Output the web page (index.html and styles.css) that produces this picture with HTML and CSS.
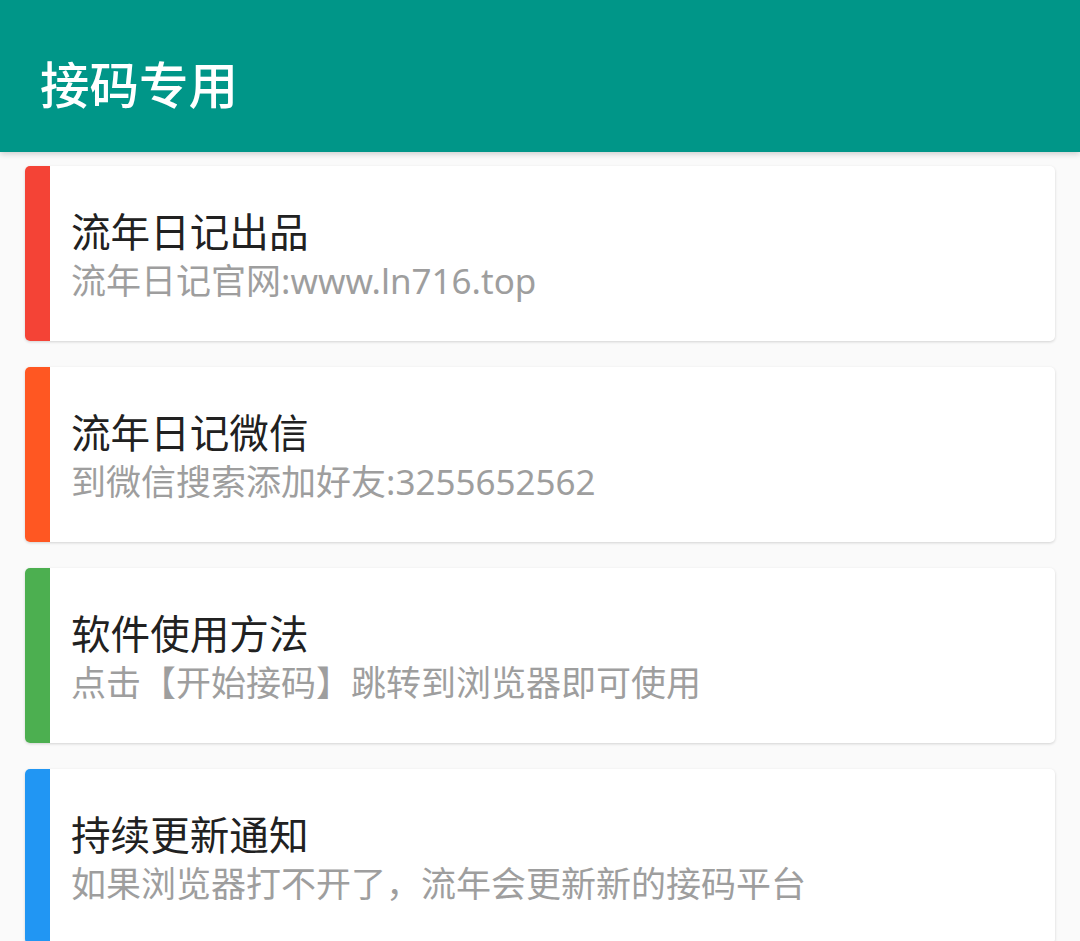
FILE: index.html
```html
<!DOCTYPE html>
<html lang="zh">
<head>
<meta charset="utf-8">
<title>接码专用</title>
<link rel="stylesheet" href="styles.css">
</head>
<body>
<header class="appbar">
  <h1 class="appbar-title">接码专用</h1>
</header>
<main class="list">
  <div class="card">
    <div class="bar bar-red"></div>
    <div class="card-body">
      <div class="card-title">流年日记出品</div>
      <div class="card-sub">流年日记官网:www.ln716.top</div>
    </div>
  </div>
  <div class="card">
    <div class="bar bar-orange"></div>
    <div class="card-body">
      <div class="card-title">流年日记微信</div>
      <div class="card-sub">到微信搜索添加好友:3255652562</div>
    </div>
  </div>
  <div class="card">
    <div class="bar bar-green"></div>
    <div class="card-body">
      <div class="card-title">软件使用方法</div>
      <div class="card-sub">点击【开始接码】跳转到浏览器即可使用</div>
    </div>
  </div>
  <div class="card">
    <div class="bar bar-blue"></div>
    <div class="card-body">
      <div class="card-title">持续更新通知</div>
      <div class="card-sub">如果浏览器打不开了，流年会更新新的接码平台</div>
    </div>
  </div>
</main>
</body>
</html>
```
FILE: styles.css
```css
html, body {
  margin: 0;
  padding: 0;
}
body {
  background: #fafafa;
  font-family: "Noto Sans CJK SC", sans-serif;
  width: 1080px;
  height: 941px;
  overflow: hidden;
}
.appbar {
  height: 152px;
  background: #009688;
  display: flex;
  align-items: center;
  padding-left: 40px;
  box-shadow: 0 2px 6px rgba(0,0,0,0.18);
  position: relative;
  z-index: 1;
}
.appbar-title {
  margin: 0;
  color: #ffffff;
  font-size: 49.5px;
  font-weight: 500;
  line-height: 1;
  margin-top: 14px;
}
.list {
  display: flex;
  flex-direction: column;
  gap: 26px;
  padding: 14px 25px 0 25px;
}
.card {
  height: 175px;
  background: #ffffff;
  border-radius: 5px;
  display: flex;
  overflow: hidden;
  box-shadow: 0 1px 3px rgba(0,0,0,0.16);
  flex-shrink: 0;
}
.bar {
  width: 25px;
  flex-shrink: 0;
}
.bar-red { background: #f44336; }
.bar-orange { background: #ff5722; }
.bar-green { background: #4caf50; }
.bar-blue { background: #2196f3; }
.card-body {
  display: flex;
  flex-direction: column;
  justify-content: center;
  padding-left: 21px;
  padding-top: 4px;
}
.card-title {
  font-size: 39.6px;
  color: #212121;
  line-height: 48px;
}
.card-sub {
  font-family: "Noto Sans", "Noto Sans CJK SC", sans-serif;
  font-size: 35px;
  color: #9e9e9e;
  line-height: 48px;
  margin-top: 3px;
}
```
